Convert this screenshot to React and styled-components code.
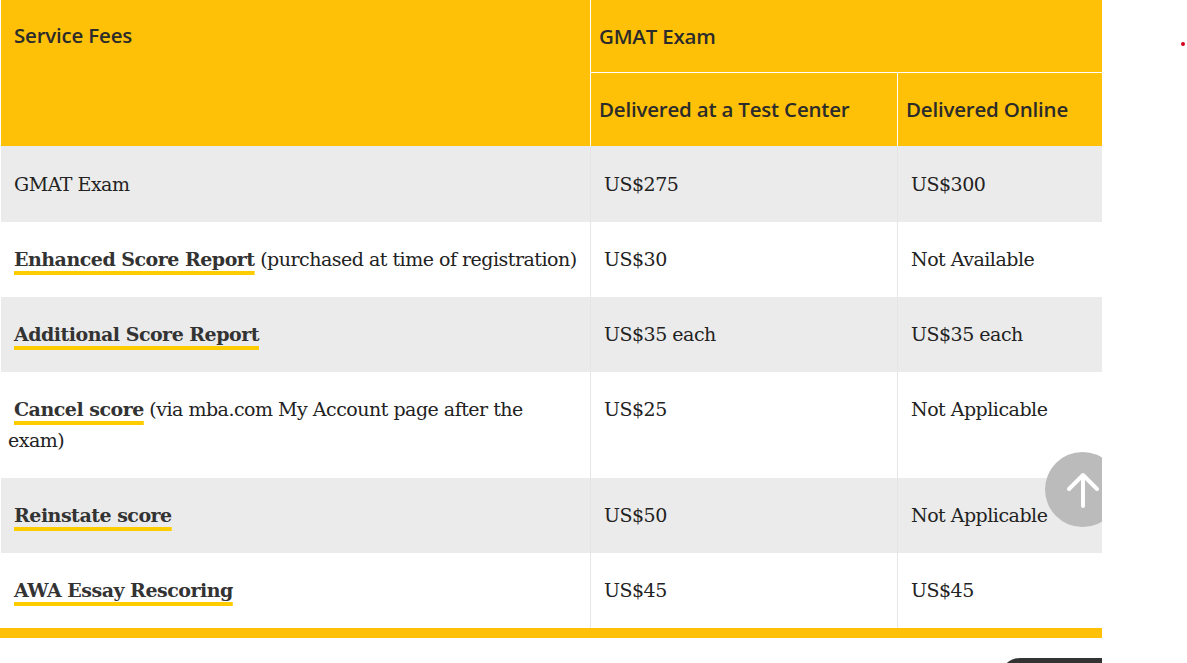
import React from "react";
import styled, { createGlobalStyle } from "styled-components";

const Global = createGlobalStyle`
  body { margin: 0; background: #fff; font-family: "DejaVu Serif", serif; }
`;
const Page = styled.div`
  position: relative; width: 1187px; height: 663px; overflow: hidden;
`;
const Wrap = styled.div`
  position: relative; width: 1102px; overflow: hidden; height: 663px;
`;
const Table = styled.table`
  width: 1102px; border-collapse: collapse; table-layout: fixed;
`;
const Th = styled.th`
  background: #ffc107; color: #2b2b2b; text-align: left; vertical-align: ${p => p.$top ? "top" : "middle"};
  font-family: "Open Sans", sans-serif; font-weight: 600; font-size: 20.5px; letter-spacing: -0.2px;
  padding: ${p => p.$top ? "21px 13px" : "0 8px"}; height: ${p => p.$h}px; box-sizing: border-box;
  border-left: 1px solid ${p => p.$first ? "transparent" : "#fff"};
  border-bottom: 1px solid ${p => p.$bb ? "#fff" : "transparent"};
`;
const Tr = styled.tr` background: ${p => p.$alt ? "#ebebeb" : "#fff"}; `;
const Td = styled.td`
  vertical-align: top; padding: 22px 7px 22px ${p => p.$first ? 7 : 13}px; color: #222;
  font-size: 19px; line-height: 31px; letter-spacing: -0.5px;
  border-left: 1px solid ${p => p.$first ? "transparent" : "#e6e6e6"};
  border-right: 1px solid #e6e6e6;
`;
const Link = styled.a`
  margin-left: 6px; font-weight: bold; color: #333;
  text-decoration: underline #ffcc00 4px; text-underline-offset: 5px; text-decoration-skip-ink: auto;
`;
const Plain = styled.span` margin-left: 6px; `;
const Footer = styled.div` height: 10px; background: #ffc107; `;
const UpButton = styled.div`
  position: absolute; left: 1045px; top: 452px; width: 75px; height: 75px; border-radius: 50%;
  background: #bbb; display: flex; align-items: center; justify-content: center;
`;
const Pill = styled.div`
  position: absolute; left: 1000px; top: 658px; width: 160px; height: 40px; border-radius: 20px; background: #333;
`;
const Dot = styled.div`
  position: absolute; left: 1181px; top: 42px; width: 4px; height: 4px; border-radius: 50%; background: #d0021b;
`;

const rows = [
  [null, "GMAT Exam", "", "US$275", "US$300"],
  ["Enhanced Score Report", null, " (purchased at time of registration)", "US$30", "Not Available"],
  ["Additional Score Report", null, "", "US$35 each", "US$35 each"],
  ["Cancel score", null, " (via mba.com My Account page after the exam)", "US$25", "Not Applicable"],
  ["Reinstate score", null, "", "US$50", "Not Applicable"],
  ["AWA Essay Rescoring", null, "", "US$45", "US$45"],
];

export default function App() {
  return (
    <Page>
      <Global />
      <Wrap>
        <Table>
          <colgroup><col style={{ width: 590 }} /><col style={{ width: 307 }} /><col style={{ width: 205 }} /></colgroup>
          <thead>
            <tr>
              <Th rowSpan={2} $top $first>Service Fees</Th>
              <Th colSpan={2} $h={72} $bb>GMAT Exam</Th>
            </tr>
            <tr>
              <Th $h={74}>Delivered at a Test Center</Th>
              <Th $h={74}>Delivered Online</Th>
            </tr>
          </thead>
          <tbody>
            {rows.map((r, i) => (
              <Tr key={i} $alt={i % 2 === 0}>
                <Td $first>
                  {r[0] ? <Link>{r[0]}</Link> : <Plain>{r[1]}</Plain>}
                  {r[2]}
                </Td>
                <Td>{r[3]}</Td>
                <Td>{r[4]}</Td>
              </Tr>
            ))}
          </tbody>
        </Table>
        <Footer />
        <UpButton>
          <svg width="40" height="40" viewBox="0 0 40 40" fill="none" stroke="#fff" strokeWidth="4" strokeLinecap="round" strokeLinejoin="round">
            <path d="M20 36V6M6 19L20 5l14 14" />
          </svg>
        </UpButton>
        <Pill />
      </Wrap>
      <Dot />
    </Page>
  );
}
